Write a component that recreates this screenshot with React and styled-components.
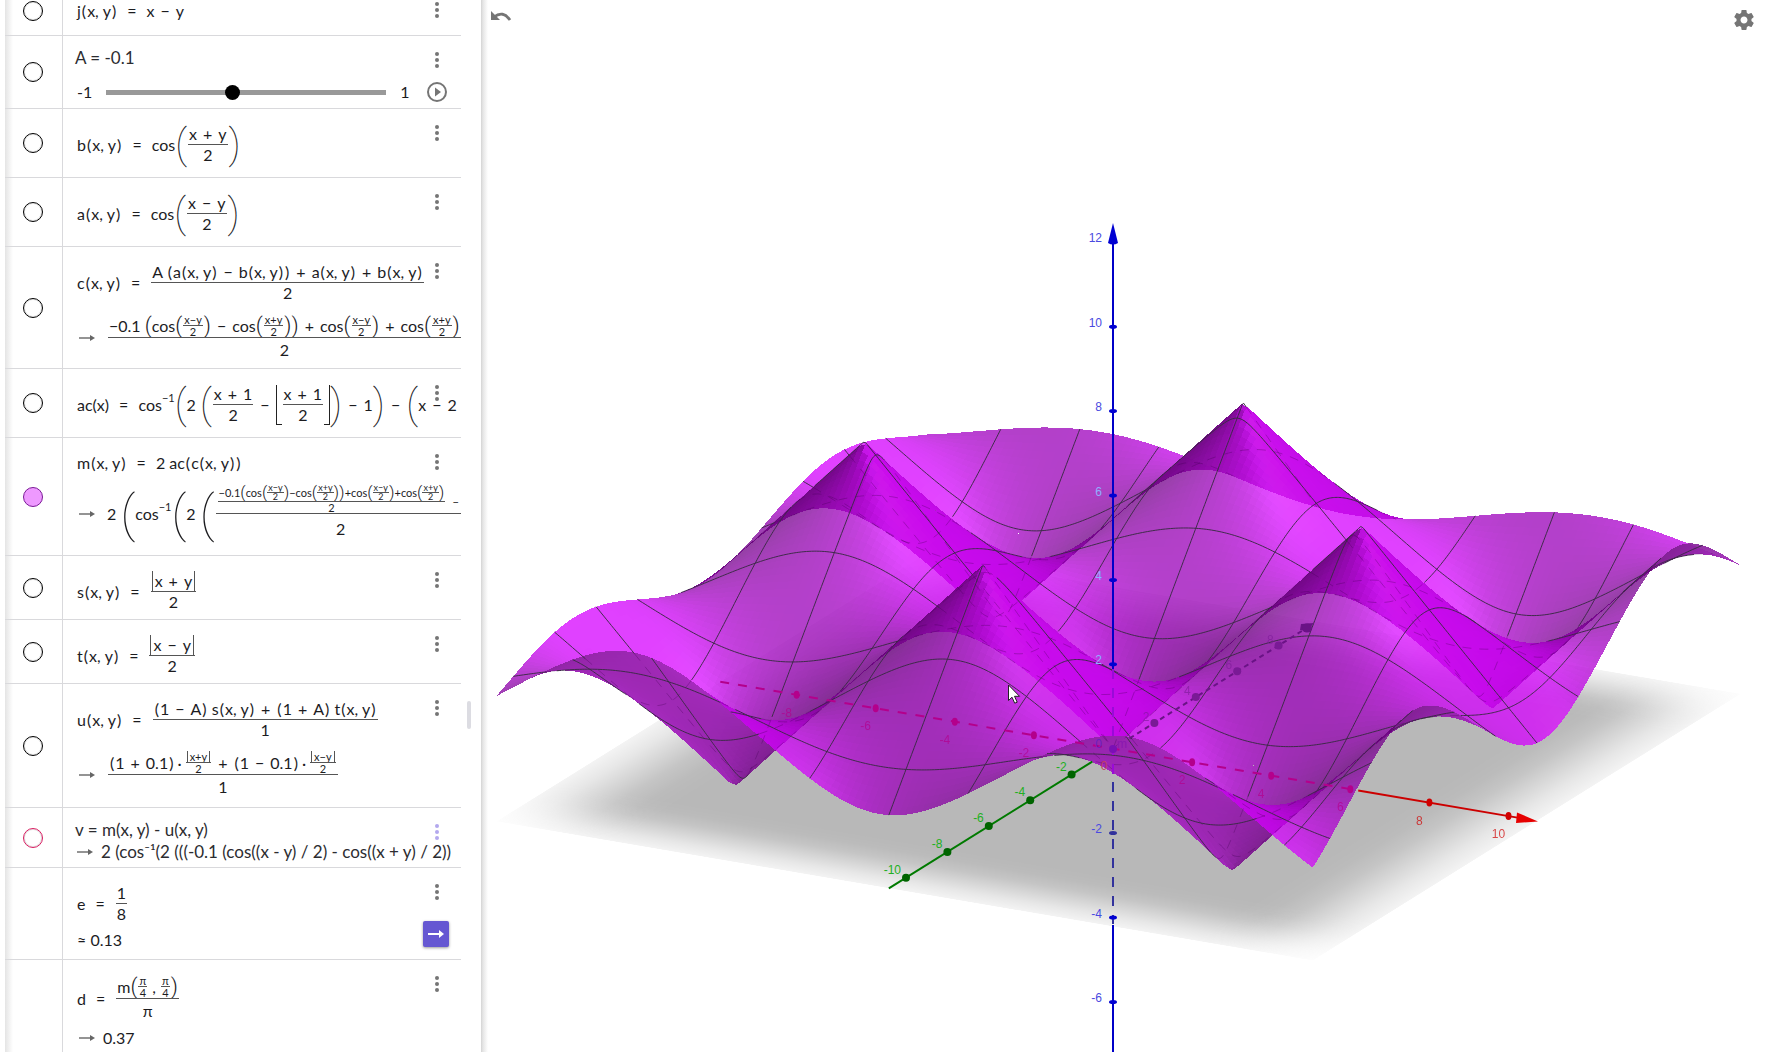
import React from "react";
import styled, { createGlobalStyle, css } from "styled-components";

const GlobalStyle = createGlobalStyle`
  *, *::before, *::after { box-sizing: border-box; }
  body { margin: 0; background: #fff; font-family: Lato, "Liberation Sans", sans-serif; font-size: 16px; color: #1c1c1f; }
  button { font: inherit; }
`;

/* ---------- page frame ---------- */

const Page = styled.div`
  display: grid;
  grid-template-columns: 481px minmax(0, 1fr);
  height: 100vh;
  overflow: hidden;
`;

const Panel = styled.aside`
  display: flex;
  overflow: hidden;
  margin-left: 5px;
  background: linear-gradient(to right, #e4e4e4, #fff 8px);
`;

const List = styled.ul`
  list-style: none;
  width: 456px;
  margin: -14px 0 0;
  padding: 0;
`;

const Track = styled.div`
  flex: 1;
  padding: 701px 0 0 6px;
`;

const Thumb = styled.div`
  width: 4px;
  height: 28px;
  border-radius: 2px;
  background: #dcdce2;
`;

const Graph = styled.main`
  position: relative;
  overflow: hidden;
  background: linear-gradient(to right, #d4d4d4, #e6e6e6 2px, #fff 7px);
`;

const CornerButton = styled.button`
  position: absolute;
  top: ${(p) => p.$top}px;
  ${(p) => (p.$side === "left" ? "left: 8px;" : "right: 10px;")}
  display: flex;
  padding: 0;
  border: 0;
  background: none;
`;

const Scene = styled.svg`
  display: block;
  width: 100%;
  height: 100%;
  font-family: "Liberation Sans", Arial, sans-serif;
  font-size: 12px;
`;

/* ---------- algebra rows ---------- */

const RowBox = styled.li`
  position: relative;
  display: grid;
  grid-template-columns: 58px minmax(0, 1fr);
  min-height: ${(p) => p.$h}px;
  border-bottom: 1px solid #d9d9dc;
`;

const MarbleCell = styled.div`
  display: flex;
  align-items: center;
  justify-content: center;
  padding-right: 1px;
  border-right: 1px solid #d9d9dc;
`;

const Marble = styled.button`
  width: 20px;
  height: 20px;
  padding: 0;
  border-radius: 50%;
  border: 1px solid ${(p) => p.$line || "#000"};
  background: ${(p) => p.$fill || "#fff"};
  box-shadow: inset 0 0 0 1px ${(p) => (p.$fill ? "transparent" : "rgba(0,0,0,0.12)")};
`;

const Body = styled.div`
  display: flex;
  flex-direction: column;
  align-items: flex-start;
  gap: ${(p) => p.$gap ?? 11}px;
  padding: ${(p) => p.$top ?? 15}px 0 0 14px;
  overflow: hidden;
`;

const MoreButton = styled.button`
  position: absolute;
  top: 14px;
  right: 14px;
  width: 20px;
  height: 20px;
  display: flex;
  align-items: center;
  justify-content: center;
  padding: 0;
  border: 0;
  background: rgba(255, 255, 255, 0.5);
  color: ${(p) => p.$color || "#757575"};
`;

const SideButton = styled.button`
  position: absolute;
  right: ${(p) => (p.$solid ? 12 : 14)}px;
  bottom: ${(p) => (p.$solid ? 12 : 6)}px;
  display: flex;
  align-items: center;
  justify-content: center;
  width: ${(p) => (p.$solid ? 26 : 20)}px;
  height: ${(p) => (p.$solid ? 26 : 20)}px;
  padding: 0;
  border: 0;
  border-radius: 2px;
  background: none;
  ${(p) =>
    p.$solid &&
    css`
      background: #6557d2;
      box-shadow: 0 1px 3px rgba(0, 0, 0, 0.4);
    `}
`;

/* ---------- formula pieces ---------- */

const Line = styled.div`
  display: inline-flex;
  align-items: center;
  white-space: pre;
  line-height: 20px;
  flex-shrink: 0;
`;

const Plain = styled(Line)`
  margin-left: -2px;
  font-size: 17px;
  line-height: 22px;
  color: #2c2c30;
`;

const Op = styled.span`
  margin: 0 ${(p) => (p.$wide ? 10 : 6)}px;
`;

const Dot = styled.span`
  margin: 0 3px;
`;

const Paren = styled.span`
  margin: 0 1px;
`;

const FracBox = styled.span`
  display: inline-grid;
  grid-template-rows: 1fr 1px 1fr;
  justify-items: center;
  margin: 0 1px;
  ${(p) =>
    p.$small &&
    css`
      font-size: 11px;
      line-height: 11px;
    `}
  ${(p) => p.$loose && "grid-template-rows: auto 1px auto;"}
`;

const Num = styled.span`
  display: inline-flex;
  align-items: center;
  align-self: end;
  padding: 0 1px;
`;

const Bar = styled.span`
  justify-self: stretch;
  background: #555;
`;

const Den = styled.span`
  display: inline-flex;
  align-items: center;
`;

const Tall = styled.span`
  font-family: Roboto, Lato, sans-serif;
  font-weight: ${(p) => (p.$s > 30 ? 100 : 300)};
  font-size: ${(p) => p.$s}px;
  line-height: ${(p) => p.$s}px;
`;

const Tiny = styled.span`
  display: inline-flex;
  align-items: flex-end;
  font-size: 11px;
  line-height: 23px;
`;

const Sup = styled.span`
  font-size: 11px;
  align-self: center;
  padding-bottom: 14px;
  line-height: 11px;
`;

const Floor = styled.span`
  border: solid #222;
  border-width: ${(p) => (p.$side === "l" ? "0 0 1px 1px" : "0 1px 1px 0")};
  width: 6px;
  height: 40px;
`;

const Abs = styled.span`
  border: solid #555;
  border-width: 0 1px;
  padding: 0 2px;
  line-height: inherit;
`;

const Arrow = styled.svg`
  margin-right: ${(p) => p.$gap || 12}px;
  margin-left: 2px;
  flex-shrink: 0;
`;

const To = ({ gap }) => (
  <Arrow $gap={gap} width="16" height="8" viewBox="0 0 16 8" aria-hidden="true">
    <path d="M0 4h12" stroke="#666" strokeWidth="1.4" />
    <path d="M11 1l5 3-5 3z" fill="#666" />
  </Arrow>
);

const Frac = ({ n, d, small }) => (
  <FracBox $small={small}>
    <Num>{n}</Num>
    <Bar />
    <Den>{d}</Den>
  </FracBox>
);

const Call = ({ f }) => <span>{f}<Paren>(</Paren>x,{"\u2005"}y<Paren>)</Paren></span>;
const Eq = () => <Op $wide>=</Op>;
const Plus = () => <Op>+</Op>;
const Minus = () => <Op>−</Op>;

const Cos = ({ sign }) => (
  <>
    cos<Tall $s={22}>(</Tall>
    <Frac small n={`x${sign}y`} d="2" />
    <Tall $s={22}>)</Tall>
  </>
);

const MiniBox = styled(FracBox)`
  font-size: 9px;
  line-height: 8px;
  margin: 0;
`;

const MiniFrac = ({ n }) => (
  <MiniBox>
    <Num>{n}</Num>
    <Bar />
    <Den>2</Den>
  </MiniBox>
);

const TinyCos = ({ sign }) => (
  <>
    cos<Tall $s={17}>(</Tall>
    <MiniFrac n={`x${sign}y`} />
    <Tall $s={17}>)</Tall>
  </>
);

const SliderLine = styled.label`
  display: flex;
  align-items: center;
  gap: 14px;
  line-height: 20px;
`;

const Slider = styled.input`
  appearance: none;
  width: 280px;
  height: 15px;
  margin: 0;
  background: linear-gradient(#999, #999) center / 100% 5px no-repeat;
  &::-webkit-slider-thumb {
    appearance: none;
    width: 15px;
    height: 15px;
    border-radius: 50%;
    background: #000;
  }
`;

function Row({ h, top, gap, marble = true, line, fill, more, extra, children }) {
  return (
    <RowBox $h={h}>
      <MarbleCell>
        {marble && <Marble type="button" aria-label="Show or hide" $line={line} $fill={fill} />}
      </MarbleCell>
      <Body $top={top} $gap={gap}>{children}</Body>
      <MoreButton type="button" aria-label="More" $color={more}>
        <svg width="4" height="16" viewBox="0 0 4 16" fill="currentColor">
          <circle cx="2" cy="2" r="2" />
          <circle cx="2" cy="8" r="2" />
          <circle cx="2" cy="14" r="2" />
        </svg>
      </MoreButton>
      {extra}
    </RowBox>
  );
}

/* ---------- surface geometry ---------- */

const A = -0.1;
const X0 = -9.93, X1 = 10.72, Y0 = -10.83, Y1 = 9.86;
const EYE = [0.4384, -0.8377, 0.3256];

const cFn = (x, y) => ((1 + A) * Math.cos((x - y) / 2) + (1 - A) * Math.cos((x + y) / 2)) / 2;
const m = (x, y) => 2 * Math.acos(Math.max(-1, Math.min(1, cFn(x, y))));
const project = (x, y, z) => [1113 + 39.55 * x + 20.7 * y, 748.7 + 6.74 * x - 12.9 * y - 42.2 * z];
const fix = (p) => `${p[0].toFixed(2)},${p[1].toFixed(2)}`;

/* Light comes from +x and above; faces seen from below are duller and denser. */
function shade(x, y) {
  const e = 0.04;
  const gx = (m(x + e, y) - m(x - e, y)) / (2 * e);
  const gy = (m(x, y + e) - m(x, y - e)) / (2 * e);
  const len = Math.hypot(gx, gy, 1);
  const n = [-gx / len, -gy / len, 1 / len];
  const dot = 0.7071 * n[0] + 0.7071 * n[2];
  const b = 0.5 + 0.5 * (dot < 0 ? -0.5 * dot : dot);
  if (n[0] * EYE[0] + n[1] * EYE[1] + n[2] * EYE[2] < 0) {
    const k = 0.55 + 0.6 * b;
    return { fill: `rgb(${Math.round(150 * k)},${Math.round(38 * k)},${Math.round(172 * k)})`, a: 0.92 };
  }
  const h = [0.7071 + EYE[0], EYE[1], 0.7071 + EYE[2]];
  const hl = Math.hypot(...h);
  const spec = Math.pow(Math.max(0, (n[0] * h[0] + n[1] * h[1] + n[2] * h[2]) / hl), 20) * 26;
  const ch = (v) => Math.round(Math.min(255, v * b + spec));
  return { fill: `rgb(${ch(213)},${ch(0)},${ch(255)})` };
}

function buildFacets(count) {
  const facets = [];
  const dx = (X1 - X0) / count, dy = (Y1 - Y0) / count;
  const corners = [];
  for (let j = 0; j <= count; j++) {
    for (let i = 0; i <= count; i++) {
      const x = X0 + i * dx, y = Y0 + j * dy;
      corners.push(fix(project(x, y, m(x, y))));
    }
  }
  const at = (i, j) => corners[j * (count + 1) + i];
  for (let j = count - 1; j >= 0; j--) {
    for (let i = 0; i < count; i++) {
      const d = `${at(i, j)} ${at(i + 1, j)} ${at(i + 1, j + 1)} ${at(i, j + 1)}`;
      facets.push({ d, ...shade(X0 + (i + 0.5) * dx, Y0 + (j + 0.5) * dy) });
    }
  }
  return facets;
}

function isHidden(x, y) {
  const z = m(x, y);
  let first = 0;
  for (let t = 0.12; t < 20; t += 0.08) {
    const px = x + EYE[0] * t, py = y + EYE[1] * t, pz = z + EYE[2] * t;
    if (px > X1 || py < Y0 || pz > 6.4) return false;
    const s = Math.sign(pz - m(px, py));
    if (!first) first = s;
    else if (s !== first) return true;
  }
  return false;
}

function buildWires() {
  const solid = [], dashed = [];
  const trace = (at, from, to) => {
    let run = [], hidden = null;
    const flush = () => {
      if (run.length > 1) (hidden ? dashed : solid).push("M" + run.join("L"));
    };
    for (let k = 0; k <= 320; k++) {
      const [x, y] = at(from + ((to - from) * k) / 320);
      const h = isHidden(x, y);
      const p = fix(project(x, y, m(x, y)));
      if (hidden !== null && h !== hidden) {
        run.push(p);
        flush();
        run = [];
      }
      hidden = h;
      run.push(p);
    }
    flush();
  };
  for (let v = -8; v <= 10; v += 2) trace((t) => [v, t], Y0, Y1);
  for (let v = -10; v <= 8; v += 2) trace((t) => [t, v], X0, X1);
  return { solid: solid.join(""), dashed: dashed.join("") };
}

const FACETS = buildFacets(140);
const WIRES = buildWires();

/* ---------- scene ---------- */

function Floorplane() {
  const w = X1 - X0, h = Y1 - Y0, f = 3 / w;
  const ramp = [[0, 0.16], [0.2, 0.34], [0.4, 0.58], [0.6, 0.82], [0.8, 0.96], [1, 1]];
  const stops = [
    ...ramp.map(([t, a]) => [t * f, a]),
    ...[...ramp].reverse().map(([t, a]) => [1 - t * f, a]),
  ].map(([o, a]) => <stop key={o} offset={o} stopColor="#fff" stopOpacity={a} />);
  return (
    <g transform="matrix(39.55 6.74 20.7 -12.9 1113 748.7)">
      <linearGradient id="fadeX">{stops}</linearGradient>
      <linearGradient id="fadeY" x2="0" y2="1">{stops}</linearGradient>
      <mask id="maskX" maskUnits="userSpaceOnUse" x={X0} y={Y0} width={w} height={h}>
        <rect x={X0} y={Y0} width={w} height={h} fill="url(#fadeX)" />
      </mask>
      <mask id="maskY" maskUnits="userSpaceOnUse" x={X0} y={Y0} width={w} height={h}>
        <rect x={X0} y={Y0} width={w} height={h} fill="url(#fadeY)" />
      </mask>
      <g mask="url(#maskX)">
        <rect x={X0} y={Y0} width={w} height={h} fill="#b8b8b8" mask="url(#maskY)" />
      </g>
    </g>
  );
}

function Axes() {
  const ax = (x) => project(x, 0, 0);
  const ay = (y) => project(0, y, 0);
  const az = (z) => project(0, 0, z);
  const seg = (a, b) => ({ x1: a[0], y1: a[1], x2: b[0], y2: b[1] });
  return (
    <g>
      {/* x axis */}
      <line {...seg(ax(-9.93), ax(6.1))} stroke="#b4008c" strokeWidth="2" strokeDasharray="9 9" />
      <line {...seg(ax(6.2), ax(10.3))} stroke="#cc0000" strokeWidth="2" />
      <path d="M1538 821.500L1517 812.500L1516 823z" fill="#e60000" />
      {[-8, -6, -4, -2, 2, 4, 6, 8, 10].map((v) => {
        const [cx, cy] = ax(v);
        return (
          <g key={v} fill={v > 6 ? "#d00000" : "#b4008c"}>
            <ellipse cx={cx} cy={cy} rx="3" ry="4" />
            <text x={cx - 10} y={cy + 22} textAnchor="middle" opacity="0.7">{v}</text>
          </g>
        );
      })}
      {/* y axis */}
      <line {...seg(ay(-10.83), ay(-1))} stroke="#007a00" strokeWidth="2" />
      <line {...seg(ay(0.8), ay(9.3))} stroke="#6a1386" strokeWidth="2" strokeDasharray="5 4" />
      <path d="M1314 623l-13 1-1 6 7 1z" fill="#6a1386" />
      <ellipse cx="1307" cy="628" rx="5" ry="4.500" fill="#6a1386" />
      {[-10, -8, -6, -4, -2].map((v) => {
        const [cx, cy] = ay(v);
        return (
          <g key={v}>
            <circle cx={cx} cy={cy} r="4" fill="#006400" />
            <text x={cx - 5} y={cy - 4} textAnchor="end" fill="#22b022">{v}</text>
          </g>
        );
      })}
      {[2, 4, 6, 8].map((v) => {
        const [cx, cy] = ay(v);
        return (
          <g key={v} fill="#7a1a96">
            <circle cx={cx} cy={cy} r="4" />
            <text x={cx - 5} y={cy - 2} textAnchor="end" opacity="0.6">{v}</text>
          </g>
        );
      })}
      {/* z axis */}
      <line x1="1113" y1="240" x2="1113" y2="669" stroke="#0000c8" strokeWidth="2" />
      <line x1="1113" y1="669" x2="1113" y2="775" stroke="#9a0ad8" strokeWidth="2" strokeDasharray="10 9" />
      <line x1="1113" y1="782" x2="1113" y2="924" stroke="#32329c" strokeWidth="2" strokeDasharray="10 9" />
      <line x1="1113" y1="925" x2="1113" y2="1052" stroke="#0000c8" strokeWidth="2" />
      <path d="M1113 223l5 20q-5 3-10 0z" fill="#0000d2" />
      {[10, 8, 6, 4, 2, -2, -4, -6].map((v) => (
        <ellipse key={v} cx="1113" cy={az(v)[1]} rx="4" ry="2" fill={v === -2 ? "#32329c" : "#0000d2"} />
      ))}
      {[12, 10, 8, 6, 4, 2, -2, -4, -6].map((v) => (
        <text key={v} x="1102" y={az(v)[1]} textAnchor="end" fill={v < 8 && v > 0 ? "#8fb0ff" : "#4a4ae0"}>{v}</text>
      ))}
      <circle cx="1113" cy="749" r="4" fill="#7a10b4" />
      <text x="1102" y="748" textAnchor="end" fill="#6a20c0">0</text>
      <text x="1122" y="748" textAnchor="middle" fill="#8a18b0">m</text>
      <text x="1104" y="770" textAnchor="middle" fill="#c04060">0</text>
    </g>
  );
}

function Plot() {
  return (
    <Scene viewBox="481 0 1285 1052" preserveAspectRatio="xMidYMin meet" role="img" aria-label="3D graph">
      <Floorplane />
      <g shapeRendering="crispEdges" fillOpacity="0.75">
        {FACETS.map((f, i) => (
          <polygon key={i} points={f.d} fill={f.fill} fillOpacity={f.a} />
        ))}
      </g>
      <path d={WIRES.dashed} fill="none" stroke="#400050" strokeOpacity="0.3" strokeDasharray="9 8" />
      <path d={WIRES.solid} fill="none" stroke="#3a2a44" strokeOpacity="0.95" />
      <Axes />
      <path
        d="M1008.500 685v15.500l3.500-3.300 2.700 6 2.500-1-2.700-5.900h5z"
        fill="#fff"
        stroke="#222"
      />
    </Scene>
  );
}

export default function App() {
  return (
    <>
      <GlobalStyle />
      <Page>
        <Panel>
          <List>
            <Row h={50}>
              <Line><Call f="j" /><Eq />x<Minus />y</Line>
            </Row>
            <Row
              h={73}
              top={11}
              gap={13}
              extra={
                <SideButton type="button" aria-label="Play">
                  <svg width="20" height="20" viewBox="0 0 20 20">
                    <circle cx="10" cy="10" r="9" fill="none" stroke="#757575" strokeWidth="2" />
                    <path d="M8 5.500l6 4.500-6 4.500z" fill="#757575" />
                  </svg>
                </SideButton>
              }
            >
              <Plain>A = -0.1</Plain>
              <SliderLine>
                <span>-1</span>
                <Slider type="range" min="-1" max="1" step="0.1" defaultValue="-0.1" aria-label="A" />
                <span>1</span>
              </SliderLine>
            </Row>
            <Row h={69}>
              <Line><Call f="b" /><Eq />cos<Tall $s={40}>(</Tall><Frac n={<>x<Plus />y</>} d="2" /><Tall $s={40}>)</Tall></Line>
            </Row>
            <Row h={69}>
              <Line><Call f="a" /><Eq />cos<Tall $s={40}>(</Tall><Frac n={<>x<Minus />y</>} d="2" /><Tall $s={40}>)</Tall></Line>
            </Row>
            <Row h={122}>
              <Line>
                <Call f="c" /><Eq />
                <Frac
                  n={<>A <Paren>(</Paren><Call f="a" /><Minus /><Call f="b" /><Paren>)</Paren><Plus /><Call f="a" /><Plus /><Call f="b" /></>}
                  d="2"
                />
              </Line>
              <Line>
                <To />
                <Frac
                  n={<>−0.1 <Tall $s={22}>(</Tall><Cos sign="−" /><Minus /><Cos sign="+" /><Tall $s={22}>)</Tall><Plus /><Cos sign="−" /><Plus /><Cos sign="+" /></>}
                  d="2"
                />
              </Line>
            </Row>
            <Row h={69}>
              <Line>
                ac(x)<Eq />cos<Sup>−1</Sup><Tall $s={40}>(</Tall>2 <Tall $s={40}>(</Tall>
                <Frac n={<>x<Plus />1</>} d="2" /><Minus />
                <Floor $side="l" /><Frac n={<>x<Plus />1</>} d="2" /><Floor $side="r" />
                <Tall $s={40}>)</Tall><Minus />1<Tall $s={40}>)</Tall><Minus /><Tall $s={40}>(</Tall>x<Minus />2
              </Line>
            </Row>
            <Row h={118} line="#7a1a96" fill="#ee99ff">
              <Line><Call f="m" /><Eq />2 ac<Paren>(</Paren><Call f="c" /><Paren>)</Paren></Line>
              <Line>
                <To />2 <Tall $s={50}>(</Tall>cos<Sup>−1</Sup><Tall $s={50}>(</Tall>2 <Tall $s={50}>(</Tall>
                <Frac
                  n={
                    <Tiny>
                      <FracBox $small $loose>
                        <Num>−0.1<Tall $s={17}>(</Tall><TinyCos sign="−" />−<TinyCos sign="+" /><Tall $s={17}>)</Tall>+<TinyCos sign="−" />+<TinyCos sign="+" /></Num>
                        <Bar />
                        <Den>2</Den>
                      </FracBox>
                      <Minus />
                    </Tiny>
                  }
                  d="2"
                />
              </Line>
            </Row>
            <Row h={64}>
              <Line><Call f="s" /><Eq /><Frac n={<Abs>x<Plus />y</Abs>} d="2" /></Line>
            </Row>
            <Row h={64}>
              <Line><Call f="t" /><Eq /><Frac n={<Abs>x<Minus />y</Abs>} d="2" /></Line>
            </Row>
            <Row h={124}>
              <Line>
                <Call f="u" /><Eq />
                <Frac
                  n={<><Paren>(</Paren>1<Minus />A<Paren>)</Paren>{"\u00a0"}<Call f="s" /><Plus /><Paren>(</Paren>1<Plus />A<Paren>)</Paren>{"\u00a0"}<Call f="t" /></>}
                  d="1"
                />
              </Line>
              <Line>
                <To />
                <Frac
                  n={<><Paren>(</Paren>1<Plus />0.1<Paren>)</Paren><Dot>·</Dot><Frac small n={<Abs>x+y</Abs>} d="2" /><Plus /><Paren>(</Paren>1<Minus />0.1<Paren>)</Paren><Dot>·</Dot><Frac small n={<Abs>x−y</Abs>} d="2" /></>}
                  d="1"
                />
              </Line>
            </Row>
            <Row h={60} top={11} gap={0} line="#d81b60" more="#b3a8ee">
              <Plain>v = m(x, y) - u(x, y)</Plain>
              <Plain><To gap={8} />2 (cos⁻¹(2 (((-0.1 (cos((x - y) / 2) - cos((x + y) / 2))</Plain>
            </Row>
            <Row
              h={92}
              gap={6}
              marble={false}
              extra={
                <SideButton type="button" $solid aria-label="Toggle result">
                  <svg width="16" height="8" viewBox="0 0 16 8">
                    <path d="M0 4h12" stroke="#fff" strokeWidth="2" />
                    <path d="M11 0l5 4-5 4z" fill="#fff" />
                  </svg>
                </SideButton>
              }
            >
              <Line>e<Eq /><Frac n="1" d="8" /></Line>
              <Line>≈ 0.13</Line>
            </Row>
            <Row h={110} gap={6} marble={false}>
              <Line>
                d<Eq />
                <Frac
                  n={<>m<Tall $s={22}>(</Tall><Frac small n="π" d="4" /> , <Frac small n="π" d="4" /><Tall $s={22}>)</Tall></>}
                  d="π"
                />
              </Line>
              <Line><To gap={8} />0.37</Line>
            </Row>
          </List>
          <Track><Thumb /></Track>
        </Panel>
        <Graph>
          <Plot />
          <CornerButton type="button" $side="left" $top={9} aria-label="Undo">
            <svg width="24" height="14" viewBox="0 0 24 14">
              <path d="M2 2v9h9z" fill="#757575" />
              <path d="M5 8Q14 1 21 11" fill="none" stroke="#757575" strokeWidth="2.800" />
            </svg>
          </CornerButton>
          <CornerButton type="button" $side="right" $top={8} aria-label="Settings">
            <svg width="24" height="24" viewBox="0 0 24 24" fill="#757575">
              <path d="M19.430 12.980c.04-.32.070-.64.070-.98s-.030-.66-.070-.98l2.110-1.650c.19-.15.240-.42.120-.64l-2-3.460c-.12-.22-.39-.3-.61-.22l-2.490 1c-.52-.4-1.080-.73-1.690-.98l-.38-2.650C14.460 2.180 14.250 2 14 2h-4c-.25 0-.46.180-.49.420l-.38 2.650c-.61.25-1.170.59-1.690.98l-2.490-1c-.23-.09-.49 0-.61.220l-2 3.460c-.13.220-.07.490.120.640l2.110 1.650c-.04.320-.07.650-.07.980s.030.660.070.980l-2.110 1.650c-.19.150-.24.420-.12.640l2 3.460c.12.220.39.300.61.220l2.490-1c.52.400 1.080.730 1.690.980l.38 2.650c.030.240.240.420.490.420h4c.25 0 .46-.18.490-.42l.38-2.650c.61-.25 1.170-.59 1.690-.98l2.490 1c.23.090.490 0 .61-.22l2-3.460c.12-.22.070-.49-.12-.64l-2.110-1.650zM12 15.500c-1.930 0-3.500-1.570-3.500-3.500s1.570-3.500 3.500-3.500 3.500 1.570 3.500 3.500-1.570 3.500-3.500 3.500z" />
            </svg>
          </CornerButton>
        </Graph>
      </Page>
    </>
  );
}
